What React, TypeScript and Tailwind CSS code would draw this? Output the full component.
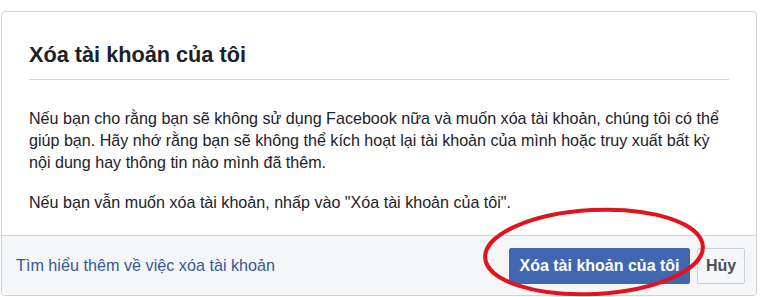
export default function App() {
  return (
    <div className="relative h-[297px] w-[761px] bg-white pt-[11px] font-['Liberation_Sans',Arial,sans-serif]">
      <div className="ml-px w-[756px] overflow-hidden rounded-[4px] border border-[#cfd1d5] bg-white">
        <div className="mx-[27px] border-b border-[#d3d5d9] pb-[12px] pt-[31px]">
          <h1 className="text-[21.7px] font-bold leading-[24px] text-[#1d2129]">
            Xóa tài khoản của tôi
          </h1>
        </div>

        <div className="space-y-[18px] px-[27px] pb-[22px] pt-[27px] text-[16.1px] leading-[22px] text-[#1d2129]">
          <p>
            Nếu bạn cho rằng bạn sẽ không sử dụng Facebook nữa và muốn xóa tài
            khoản, chúng tôi có thể giúp bạn. Hãy nhớ rằng bạn sẽ không thể kích
            hoạt lại tài khoản của mình hoặc truy xuất bất kỳ nội dung hay thông
            tin nào mình đã thêm.
          </p>
          <p>Nếu bạn vẫn muốn xóa tài khoản, nhấp vào "Xóa tài khoản của tôi".</p>
        </div>

        <div className="flex h-[60px] items-center justify-between border-t border-[#d3d5d9] bg-[#f5f6f7] pl-[14px] pr-[11px]">
          <a className="text-[16.2px] text-[#365899]">
            Tìm hiểu thêm về việc xóa tài khoản
          </a>
          <div className="flex gap-[7px]">
            <button className="h-[36px] w-[181px] rounded-[2px] border border-[#4267b2] bg-[#4267b2] text-[16px] font-bold text-white">
              Xóa tài khoản của tôi
            </button>
            <button className="h-[36px] w-[48px] rounded-[2px] border border-[#ccd0d5] bg-[#f6f7f9] text-[16px] font-bold text-[#4b4f56]">
              Hủy
            </button>
          </div>
        </div>
      </div>

      <svg
        className="pointer-events-none absolute left-[478px] top-[204px]"
        width="232"
        height="93"
        viewBox="0 0 232 93"
      >
        <ellipse
          cx="116"
          cy="48"
          rx="109"
          ry="42"
          transform="rotate(-3 116 48)"
          fill="none"
          stroke="#e0141e"
          strokeWidth="4"
        />
      </svg>
    </div>
  );
}
